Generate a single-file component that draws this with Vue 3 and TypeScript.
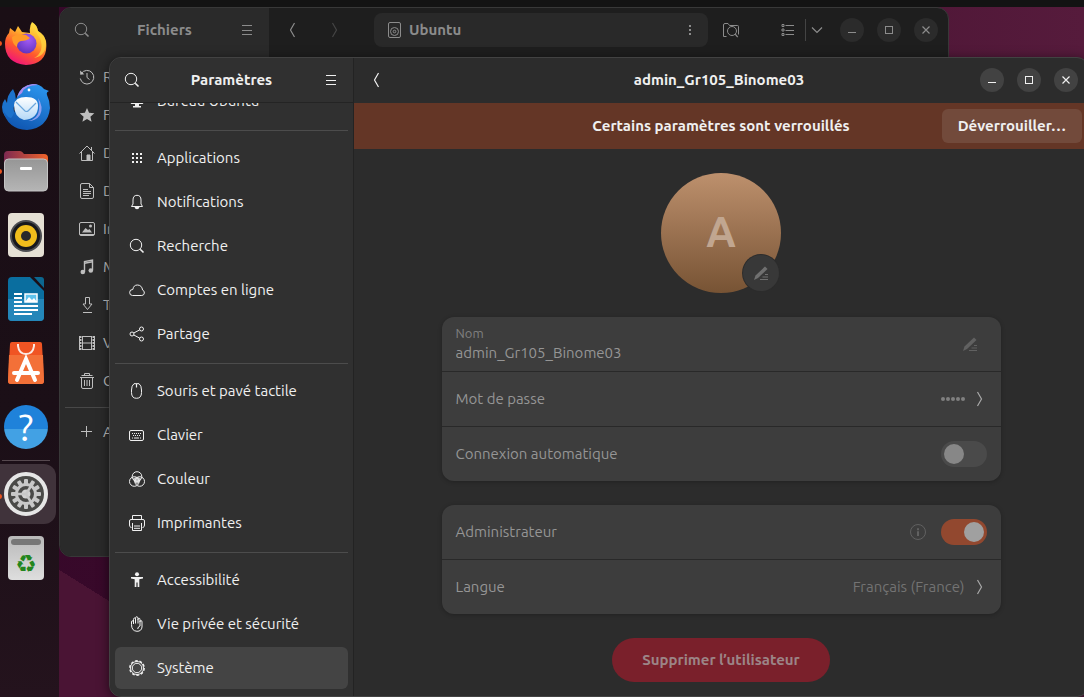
<script setup lang="ts">
import { ref } from 'vue'

interface Entry {
  icon: string
  label: string
}

const glyphs: Record<string, string> = {
  search: '<circle cx="7" cy="7" r="5.7"/><path d="M11.2 11.2l3.3 3.3" stroke-width="1.6"/>',
  menu: '<path d="M3 3.5h10M3 8.5h10M3 12.5h10"/>',
  back: '<path d="M9.500 1 5.500 8l4 7" stroke-width="1.200"/>',
  forward: '<path d="M6.500 1l4 7-4 7" stroke-width="1.200"/>',
  down: '<path d="M3 5.500l5 5 5-5" stroke-width="1.200"/>',
  minimize: '<path d="M4 10.500h8"/>',
  maximize: '<rect x="4.500" y="4.500" width="7" height="7"/>',
  close: '<path d="M4.500 4.500l7 7M11.500 4.500l-7 7" stroke-width="1.200"/>',
  drive: '<rect x="2.500" y=".5" width="12" height="15" rx="1.500"/><circle cx="8.500" cy="9.500" r="4"/><circle cx="8.500" cy="9.500" r="1.300"/>',
  dots: '<path d="M7 3h2v2H7zM7 7h2v2H7zM7 11h2v2H7z" fill="currentColor" stroke="none"/>',
  folderSearch: '<path d="M3.500 14.500H.5V3q0-1.500 1.500-1.500h3l1.500 2h8q1 0 1 1v8"/><circle cx="9" cy="9" r="4.500"/><path d="M12.200 12.200l2.500 3" stroke-width="1.300"/>',
  list: '<path d="M5.500 3.500H14M5.500 8.500H14M5.500 12.500H14"/><path d="M2 2.500h2v2H2zM2 7h2v2H2zM2 11.500h2v2H2z"/>',
  recent: '<path d="M2.300 4.500A6.800 6.800 0 1 1 1.300 9.500"/><path d="M1 1.500l.3 4.200 4-.4z" fill="currentColor" stroke="none"/><path d="M8 4v4.500l2.500 2"/>',
  star: '<path d="M8 1l2.100 4.800 5.200.5-3.900 3.400 1.200 5.100L8 12.100l-4.600 2.700 1.200-5.100L.7 6.300l5.200-.5z" fill="currentColor" stroke="none"/>',
  home: '<path d="M.5 8.500L8 1l7.500 7.500"/><path d="M2.500 7v8.500h11V7M12.500 5V2"/><path d="M8 15.500V10h3v5.500z" fill="currentColor"/>',
  document: '<path d="M10.500.5H3Q1.500.5 1.500 2v12q0 1.500 1.500 1.500h10q1.500 0 1.500-1.500V4.500z"/><path d="M10.500.5v4h4M4 6.500h5M4 8.500h8M4 10.500h8M4 12.500h6"/>',
  image: '<rect x=".5" y="1.500" width="15" height="13" rx="1.500"/><path d="M3 11.500l3.500-4.500 2.500 2 1.500-1L13 11.500z" fill="currentColor" stroke="none"/><circle cx="11.500" cy="5" r="1.500" fill="currentColor" stroke="none"/><path d="M1 13.500h14"/>',
  music: '<path d="M5.500 13V2.500l8-1.500v10" stroke-width="1.400"/><path d="M5.500 4.200l8-1.500" stroke-width="1.500"/><circle cx="3.800" cy="13" r="2.300" fill="currentColor" stroke="none"/><circle cx="11.800" cy="11.500" r="2.300" fill="currentColor" stroke="none"/>',
  download: '<path d="M6.500.5h4V7h2.500l-4.500 5.500L4 7h2.500zM4 15.500h9"/>',
  video: '<rect x="3.500" y="1.500" width="9" height="13"/><path d="M3 8h10"/><path d="M1.500 1v14M14.500 1v14" stroke-width="2" stroke-dasharray="2 1"/><path d="M.5 1v14M15.500 1v14"/>',
  trash: '<path d="M1 4.500h14M5.500 2.500v-2h5v2M2.500 2.500h11M2.500 5v9q0 1.500 1.500 1.500h8q1.500 0 1.500-1.500V5M5.500 7v6M8 7v6M10.500 7v6"/>',
  plus: '<path d="M7.500 2v11M2 7.500h11"/>',
  desktop: '<rect x="1.500" y="1.500" width="13" height="9" rx="1.500"/><path d="M2 9h3v1.500H2zM11 9h3v1.500h-3zM6 11h4v2h2v1.500H4V13h2z" fill="currentColor" stroke="none"/>',
  apps: '<path d="M3 3h2v2H3zM7 3h2v2H7zM11 3h2v2h-2zM3 7h2v2H3zM7 7h2v2H7zM11 7h2v2h-2zM3 11h2v2H3zM7 11h2v2H7zM11 11h2v2h-2z" fill="currentColor" stroke="none"/>',
  bell: '<path d="M2.500 12.500h11L12 10V6Q12 1.300 8 1.300T4 6v4z"/><path d="M5.500 13h5Q10 15.300 8 15.300T5.500 13z" fill="currentColor" stroke="none"/>',
  cloud: '<path d="M3.500 13.500h9.300a2.800 2.800 0 0 0 .8-5.400Q12.800 3 8.300 3 4.600 3 3.800 7.500A3 3 0 0 0 3.500 13.500z"/>',
  share: '<circle cx="3" cy="8" r="2"/><circle cx="12.500" cy="3" r="2"/><circle cx="12.500" cy="13" r="2"/><path d="M4.800 7l6-3.200M4.800 9l6 3.200"/>',
  mouse: '<path d="M5 .7h5Q12.500 2.500 12.500 7v2.500Q12.500 15.300 7.500 15.300T2.500 9.500V7Q2.500 2.500 5 .7z"/><path d="M7.500 1v3.500" stroke-width="1.200"/>',
  keyboard: '<rect x=".5" y="3.500" width="14" height="10" rx="1.500"/><path d="M3 6.500h10M4 8.500h8" stroke-dasharray="1 1"/><path d="M3 11h1M5 11h5M11 11h1"/>',
  color: '<circle cx="8" cy="5.500" r="4.800"/><circle cx="5.300" cy="10.500" r="4.800"/><circle cx="10.700" cy="10.500" r="4.800"/><path d="M4 7.500q4-3 8 0-.5 4-4 5.500-3.500-1.500-4-5.500z" fill="currentColor" fill-opacity=".75" stroke="none"/>',
  printer: '<path d="M3.500 4V.5h9V4"/><path d="M2.500 12.500H2Q.5 12 .5 10V6Q.5 4.500 2 4.500h12q1.500 0 1.500 1.500v4q0 2-1.500 2.500h-.5"/><path d="M3.500 8v7.500h9V8M5 11h6M5 13.300h6"/>',
  person: '<circle cx="8" cy="2.300" r="2" fill="currentColor" stroke="none"/><path d="M2 5h12v1.500l-3.700.8V15H8.600v-4.500H7.400V15H5.700V7.300L2 6.500z" fill="currentColor" stroke="none"/>',
  hand: '<path d="M4.500 8V3.500q0-1.500 1-1.500t1 1.500v-1Q6.500.7 7.700.7T9 2.500v1q0-1.300 1-1.300T11 3.700v2q0-1.200 1-1.200t1 1.500v5Q12.500 15.300 8 15.300 2.500 15 2.500 8.500V6q0-1.200 1-1.200T4.500 6z"/><path d="M6.500 3v4.500M9 3v4.500M11 5v5Q9 10.500 8.700 13"/>',
  gear: '<circle cx="8" cy="8" r="4.700"/><circle cx="8" cy="8" r="6.500"/><circle cx="8" cy="8" r="7.200" stroke-width="1.400" stroke-dasharray="2.800 1.724"/>',
  pencil: '<path d="M1 15l1.500-4.500L12 1.500l2.500 2.500L5 13z" fill="currentColor" stroke="none"/><path d="M12 9.500h3M9.500 12H15M7 14.500h8" stroke-width="1.200"/>',
  info: '<circle cx="8" cy="8" r="7.500"/><path d="M7 4.200h2v2H7zM7 7.200h2V12H7z" fill="currentColor" stroke="none"/>',
}

const places: Entry[] = [
  { icon: 'recent', label: 'Récents' },
  { icon: 'star', label: 'Favoris' },
  { icon: 'home', label: 'Dossier' },
  { icon: 'document', label: 'Docs' },
  { icon: 'image', label: 'Images' },
  { icon: 'music', label: 'Musique' },
  { icon: 'download', label: 'Télécharg.' },
  { icon: 'video', label: 'Vidéos' },
  { icon: 'trash', label: 'Corbeille' },
]

const panels: Entry[][] = [
  [{ icon: 'desktop', label: 'Bureau Ubuntu' }],
  [
    { icon: 'apps', label: 'Applications' },
    { icon: 'bell', label: 'Notifications' },
    { icon: 'search', label: 'Recherche' },
    { icon: 'cloud', label: 'Comptes en ligne' },
    { icon: 'share', label: 'Partage' },
  ],
  [
    { icon: 'mouse', label: 'Souris et pavé tactile' },
    { icon: 'keyboard', label: 'Clavier' },
    { icon: 'color', label: 'Couleur' },
    { icon: 'printer', label: 'Imprimantes' },
  ],
  [
    { icon: 'person', label: 'Accessibilité' },
    { icon: 'hand', label: 'Vie privée et sécurité' },
    { icon: 'gear', label: 'Système' },
  ],
]

const windowButtons: Entry[] = [
  { icon: 'minimize', label: 'Réduire' },
  { icon: 'maximize', label: 'Agrandir' },
  { icon: 'close', label: 'Fermer' },
]

const current = ref('Système')
const userName = ref('admin_Gr105_Binome03')
const autoLogin = ref(false)
const administrator = ref(true)
const teeth = Array.from({ length: 12 }, (_, i) => i * 30)
</script>

<template>
  <div class="desktop">
    <div class="topbar"></div>
    <div class="screen">
      <nav class="dock" aria-label="Dock">
        <button class="launcher running" aria-label="Firefox">
          <svg viewBox="0 0 44 44">
            <defs>
              <linearGradient id="fx" x1=".8" y1="0" x2=".3" y2="1">
                <stop offset="0" stop-color="#fff04a" /><stop offset=".35" stop-color="#ffb02e" />
                <stop offset=".65" stop-color="#ff5a2c" /><stop offset="1" stop-color="#f0127c" />
              </linearGradient>
              <radialGradient id="fxg" cx=".6" cy=".3" r=".8">
                <stop offset="0" stop-color="#a35bf5" /><stop offset="1" stop-color="#5a2fb8" />
              </radialGradient>
            </defs>
            <path d="M28 1q5 3 6 9 6 4 8 10Q45 43 22 44 1 42 1 23q0-7 4-11l1-5 5 4 3-6 4 6 8 1q-1-7 2-11z" fill="url(#fx)" />
            <circle cx="22.500" cy="22.500" r="10" fill="url(#fxg)" />
            <path d="M8 16q6-4 14-2l4 3q-3 3-9 3-4 1-4 6-5-3-5-10z" fill="#ff9a28" />
            <path d="M29 2q2 9 7 15 5 14-6 20 12-2 12-15-1-9-8-12-1-6-5-8z" fill="#ffd53f" opacity=".75" />
          </svg>
        </button>
        <button class="launcher" aria-label="Thunderbird">
          <svg class="wide" viewBox="0 0 48 48">
            <defs>
              <linearGradient id="tb" x1=".7" y1="0" x2=".3" y2="1">
                <stop offset="0" stop-color="#2a94ec" /><stop offset="1" stop-color="#0f55b0" />
              </linearGradient>
              <linearGradient id="tbm" x2="0" y2="1">
                <stop offset="0" stop-color="#ffffff" /><stop offset="1" stop-color="#b4d8f7" />
              </linearGradient>
            </defs>
            <path d="M11 6q3 5 3 11-4 8-1 15l-2 8Q0 34 0 24q0-4 3-8l2 4q0-8 6-14z" fill="#1c72cc" />
            <path d="M15 14Q19 2 31 1q7 0 11 5l5 2q-3 1-2 4 3 6 3 13-2 20-23 22Q5 46 1 27q4 7 8 8 3-3 4-9-1-7 2-12z" fill="url(#tb)" />
            <path d="M15 14Q19 2 31 1q3 0 5 1-13 0-16 8z" fill="#a98aec" />
            <path d="M36 15q6 9 2 17-4 6-12 6 10-2 11-11 1-6-1-12z" fill="#8fa0f0" />
            <path d="M12 22q1-8 12-8 12 0 12 9 0 13-14 14-10-3-10-15z" fill="url(#tbm)" />
            <path d="M14 19l9 9q2 1 3 0l8-8" fill="none" stroke="#6aa6dc" stroke-width="1.200" />
            <circle cx="27" cy="7" r="1.400" fill="#fff" />
          </svg>
        </button>
        <button class="launcher running" aria-label="Fichiers">
          <svg viewBox="0 0 44 44">
            <defs>
              <linearGradient id="fo"><stop offset="0" stop-color="#7d2951" /><stop offset="1" stop-color="#f0642b" /></linearGradient>
              <linearGradient id="ff" x2="0" y2="1"><stop offset="0" stop-color="#969696" /><stop offset="1" stop-color="#b5b5b5" /></linearGradient>
            </defs>
            <path d="M0 6q0-4 4-4h12q2 0 4 3h20q4 0 4 4v15H0z" fill="url(#fo)" />
            <rect x=".5" y="10" width="43" height="32" rx="4" fill="url(#ff)" stroke="#c4c4c4" />
            <rect x="16" y="18" width="12" height="3" rx="1" fill="#fff" />
          </svg>
        </button>
        <button class="launcher" aria-label="Rhythmbox">
          <svg viewBox="0 0 44 44">
            <rect x="4" width="36" height="44" rx="4" fill="#e5e0d4" />
            <circle cx="22" cy="23" r="16" fill="#4b4c50" />
            <circle cx="22" cy="23" r="14" fill="#17181c" />
            <circle cx="22" cy="23" r="11" fill="#f0bd1c" />
            <circle cx="22" cy="23" r="5" fill="#29292b" />
          </svg>
        </button>
        <button class="launcher" aria-label="LibreOffice Writer">
          <svg viewBox="0 0 44 44">
            <path d="M8 0h18l14 14v26q0 4-4 4H8q-4 0-4-4V4q0-4 4-4z" fill="#0a6e9f" />
            <path d="M4 22h36v18q0 4-4 4H8q-4 0-4-4z" fill="#2486b9" />
            <path d="M30 0h7q3 0 3 3v8z" fill="#0c668f" />
            <path d="M10 17h8M10 21h8M10 25h8M10 29h24M10 33h24M10 37h18" stroke="#fff" stroke-width="2" />
            <rect x="21" y="17" width="12" height="8" fill="#5ec3ec" stroke="#fff" stroke-width="1.500" />
            <path d="M21 25l4-5 3 3 2-2 3 4z" fill="#fff" />
          </svg>
        </button>
        <button class="launcher" aria-label="Logithèque">
          <svg viewBox="0 0 44 44">
            <path d="M6 3q0-2 2-2h28q2 0 2 2l2 37q0 3-3 3H7q-3 0-3-3z" fill="#f05423" />
            <path d="M5 14h34l1 26q0 3-3 3H7q-3 0-3-3z" fill="#f37038" />
            <path d="M14 3v2q1 8 8 8t8-8V3" fill="none" stroke="#fbe9e2" stroke-width="2" />
            <path d="M13 39l9-21 9 21M10 32h24" fill="none" stroke="#fff" stroke-width="4" stroke-linecap="round" />
          </svg>
        </button>
        <button class="launcher help" aria-label="Aide"><span>?</span></button>
        <hr class="dock-line" />
        <button class="launcher running active" aria-label="Paramètres">
          <svg viewBox="0 0 44 44">
            <circle cx="22" cy="22" r="20" fill="#4a4a48" stroke="#e6e6e6" stroke-width="4" />
            <rect v-for="t in teeth" :key="t" x="20" y="7" width="4" height="6" rx="1" fill="#c8c8c8" :transform="`rotate(${t} 22 22)`" />
            <circle cx="22" cy="22" r="9.500" fill="none" stroke="#c8c8c8" stroke-width="3" />
            <circle cx="22" cy="22" r="4.500" fill="#d2d2d2" />
            <path d="M22 22h-9M22 22l5-8M22 22l5 8" stroke="#c8c8c8" stroke-width="2.500" />
          </svg>
        </button>
        <button class="launcher" aria-label="Corbeille">
          <svg viewBox="0 0 44 44">
            <defs><linearGradient id="tr" x2="0" y2="1"><stop offset="0" stop-color="#b9b9b9" /><stop offset="1" stop-color="#dedede" /></linearGradient></defs>
            <rect x="4" width="36" height="44" rx="4" fill="url(#tr)" />
            <rect x="7" y="3" width="30" height="6" rx="3" fill="#777" />
            <text class="recycle" x="22" y="36" text-anchor="middle">♻</text>
          </svg>
        </button>
      </nav>

      <main class="workspace">
        <section class="window files" aria-label="Fichiers">
          <aside class="files-side">
            <header class="bar">
              <button class="tool" aria-label="Rechercher"><svg class="icon" viewBox="0 0 16 16" v-html="glyphs.search"></svg></button>
              <h2>Fichiers</h2>
              <button class="tool" aria-label="Menu"><svg class="icon" viewBox="0 0 16 16" v-html="glyphs.menu"></svg></button>
            </header>
            <div class="places">
              <a v-for="p in places" :key="p.label" class="place" href="#">
                <svg class="icon" viewBox="0 0 16 16" v-html="glyphs[p.icon]"></svg><span>{{ p.label }}</span>
              </a>
              <hr />
              <a class="place" href="#">
                <svg class="icon" viewBox="0 0 16 16" v-html="glyphs.plus"></svg><span>Autres</span>
              </a>
            </div>
          </aside>
          <div class="files-main">
            <header class="bar">
              <button class="tool" aria-label="Précédent"><svg class="icon" viewBox="0 0 16 16" v-html="glyphs.back"></svg></button>
              <button class="tool faint" aria-label="Suivant"><svg class="icon" viewBox="0 0 16 16" v-html="glyphs.forward"></svg></button>
              <div class="path">
                <svg class="icon" viewBox="0 0 16 16" v-html="glyphs.drive"></svg>
                <span>Ubuntu</span>
                <button class="path-menu" aria-label="Options"><svg class="icon" viewBox="0 0 16 16" v-html="glyphs.dots"></svg></button>
              </div>
              <button class="tool" aria-label="Rechercher dans le dossier"><svg class="icon" viewBox="0 0 16 16" v-html="glyphs.folderSearch"></svg></button>
              <div class="view">
                <button class="tool" aria-label="Liste"><svg class="icon" viewBox="0 0 16 16" v-html="glyphs.list"></svg></button>
                <button class="view-more" aria-label="Affichage"><svg class="icon" viewBox="0 0 16 16" v-html="glyphs.down"></svg></button>
              </div>
              <div class="controls">
                <button v-for="b in windowButtons" :key="b.label" class="round" :aria-label="b.label">
                  <svg class="icon" viewBox="0 0 16 16" v-html="glyphs[b.icon]"></svg>
                </button>
              </div>
            </header>
          </div>
        </section>

        <section class="window settings" aria-label="Paramètres">
          <aside class="set-side">
            <header class="bar">
              <button class="tool" aria-label="Rechercher"><svg class="icon" viewBox="0 0 16 16" v-html="glyphs.search"></svg></button>
              <h2>Paramètres</h2>
              <button class="tool" aria-label="Menu"><svg class="icon" viewBox="0 0 16 16" v-html="glyphs.menu"></svg></button>
            </header>
            <nav class="panels">
              <div v-for="(group, i) in panels" :key="i" class="group">
                <button
                  v-for="p in group"
                  :key="p.label"
                  class="panel"
                  :class="{ selected: p.label === current }"
                  @click="current = p.label"
                >
                  <svg class="icon" viewBox="0 0 16 16" v-html="glyphs[p.icon]"></svg>{{ p.label }}
                </button>
              </div>
            </nav>
          </aside>

          <div class="set-main">
            <header class="bar">
              <button class="tool" aria-label="Retour"><svg class="icon" viewBox="0 0 16 16" v-html="glyphs.back"></svg></button>
              <h1>{{ userName }}</h1>
              <div class="controls">
                <button v-for="b in windowButtons" :key="b.label" class="round" :aria-label="b.label">
                  <svg class="icon" viewBox="0 0 16 16" v-html="glyphs[b.icon]"></svg>
                </button>
              </div>
            </header>
            <div class="banner">
              <p>Certains paramètres sont verrouillés</p>
              <button class="unlock">Déverrouiller…</button>
            </div>
            <div class="content">
              <div class="avatar">
                A
                <button class="avatar-edit" aria-label="Modifier l’image"><svg class="icon" viewBox="0 0 16 16" v-html="glyphs.pencil"></svg></button>
              </div>
              <div class="card">
                <div class="row">
                  <div class="field">
                    <label for="name">Nom</label>
                    <input id="name" v-model="userName" type="text" />
                  </div>
                  <svg class="icon pencil" viewBox="0 0 16 16" v-html="glyphs.pencil"></svg>
                </div>
                <button class="row">
                  <span class="name">Mot de passe</span>
                  <span class="bullets"><i v-for="n in 5" :key="n"></i></span>
                  <svg class="icon go" viewBox="0 0 16 16" v-html="glyphs.forward"></svg>
                </button>
                <div class="row">
                  <label class="name" for="auto">Connexion automatique</label>
                  <input id="auto" v-model="autoLogin" class="switch" type="checkbox" />
                </div>
              </div>
              <div class="card">
                <div class="row">
                  <label class="name" for="admin">Administrateur</label>
                  <svg class="icon info" viewBox="0 0 16 16" v-html="glyphs.info"></svg>
                  <input id="admin" v-model="administrator" class="switch" type="checkbox" />
                </div>
                <button class="row">
                  <span class="name">Langue</span>
                  <span class="value">Français (France)</span>
                  <svg class="icon go" viewBox="0 0 16 16" v-html="glyphs.forward"></svg>
                </button>
              </div>
              <button class="delete">Supprimer l’utilisateur</button>
            </div>
          </div>
        </section>
      </main>
    </div>
  </div>
</template>

<style>
html,
body {
  background: #131313;
}
</style>

<style scoped>
* {
  box-sizing: border-box;
}
.desktop {
  display: flex;
  flex-direction: column;
  height: 100vh;
  overflow: hidden;
  font-family: Ubuntu, "Open Sans", "Noto Sans", sans-serif;
  font-size: 15px;
  line-height: 20px;
  color: #f0f0f0;
}
button {
  padding: 0;
  border: 0;
  background: none;
  color: inherit;
  font: inherit;
}
h1,
h2,
p,
hr {
  margin: 0;
  border: 0;
}
h1,
h2 {
  flex: 1;
  font-size: 15px;
  font-weight: 600;
  line-height: 20px;
  text-align: center;
}
a {
  color: inherit;
  text-decoration: none;
}
.icon {
  display: block;
  flex: none;
  width: 16px;
  height: 16px;
  fill: none;
  stroke: currentColor;
}
.topbar {
  flex: none;
  height: 7px;
  background: #131313;
}
.screen {
  display: flex;
  flex: 1;
  min-height: 0;
  background: linear-gradient(212deg, transparent 88%, #4a1434 88%), linear-gradient(90deg, #36082a, #3c0b29 30%, #561b3c);
}
.dock {
  display: flex;
  flex: none;
  flex-direction: column;
  width: 59px;
  padding: 4px 3px 0 0;
  background: linear-gradient(#1a0e15, #1b0f17 60%, #24131d);
}
.launcher {
  position: relative;
  display: flex;
  flex: none;
  align-items: center;
  justify-content: center;
  height: 64px;
  padding-right: 4px;
}
.launcher svg {
  width: 44px;
  height: 44px;
}
.launcher svg.wide {
  width: 48px;
  height: 48px;
}
.recycle {
  fill: #23861d;
  font-family: "DejaVu Sans", sans-serif;
  font-size: 24px;
}
.running::before {
  content: "";
  position: absolute;
  left: -3px;
  top: 30px;
  width: 5px;
  height: 5px;
  border-radius: 3px;
  background: #e95420;
}
.active {
  height: 60px;
  margin: 2px 0;
  border-radius: 0 12px 12px 0;
  background: #40333b;
}
.help span {
  width: 44px;
  height: 44px;
  border-radius: 50%;
  background: linear-gradient(#1f82da 0 54%, #42a1e4 54%);
  color: #fff;
  font-size: 38px;
  line-height: 44px;
}
.dock-line {
  flex: none;
  height: 1px;
  margin: 1px 6px 1px 2px;
  background: #56494f;
}
.workspace {
  position: relative;
  flex: 1;
}
.window {
  position: absolute;
  display: flex;
  overflow: hidden;
  border: 1px solid #424242;
  border-radius: 12px;
}
.files {
  inset: 0 135px 140px 0;
  border-color: #383838;
  color: #8c8c8c;
  background: #1e1e1e;
}
.settings {
  inset: 50px -5px 0 50px;
  background: #2c2c2c;
  box-shadow: 0 2px 12px rgb(0 0 0 / 55%);
}
.bar {
  display: flex;
  flex: none;
  align-items: center;
  height: 45px;
  padding: 0 5px 1px;
}
.tool {
  display: flex;
  flex: none;
  align-items: center;
  justify-content: center;
  width: 34px;
  height: 34px;
}
.faint {
  margin-left: 7px;
  opacity: 0.35;
}
.files-side {
  width: 209px;
  background: #2a2a2a;
}
.places {
  padding: 5px;
  color: #bebebe;
}
.place {
  display: flex;
  align-items: center;
  gap: 8px;
  height: 38px;
  padding-left: 14px;
}
.places hr {
  height: 1px;
  margin: 7px 0 5px;
  background: #484848;
}
.files-main {
  flex: 1;
}
.files-main .bar {
  padding: 0 10px 1px 7px;
}
.path {
  display: flex;
  flex: 1;
  align-items: center;
  gap: 7px;
  height: 34px;
  margin: 0 6px 0 23px;
  padding: 0 10px 0 12px;
  border-radius: 8px;
  background: #292929;
  font-weight: 600;
}
.path span {
  flex: 1;
}
.view {
  display: flex;
  align-items: center;
  margin: 0 13px 0 23px;
}
.view-more {
  height: 22px;
  padding: 3px 2px 3px 3px;
  border-left: 1px solid #444;
}
.controls {
  display: flex;
  gap: 13px;
}
.round {
  display: flex;
  align-items: center;
  justify-content: center;
  width: 24px;
  height: 24px;
  border-radius: 50%;
  background: #2b2b2b;
}
.settings .round {
  background: #424242;
}
.set-side {
  display: flex;
  flex: none;
  flex-direction: column;
  width: 244px;
  border-right: 1px solid #232323;
  background: #303030;
}
.set-side .bar {
  padding-bottom: 0;
  border-bottom: 1px solid #242424;
}
.panels {
  display: flex;
  flex: 1;
  flex-direction: column;
  justify-content: flex-end;
  min-height: 0;
  padding: 0 5px 5px;
  overflow: hidden;
}
.group {
  flex: none;
}
.group + .group {
  margin-top: 6px;
  padding-top: 6px;
  border-top: 1px solid #4c4c4c;
}
.panel {
  display: flex;
  align-items: center;
  gap: 12px;
  width: 100%;
  height: 42px;
  margin-bottom: 2px;
  padding-left: 14px;
  border-radius: 6px;
}
.selected {
  background: #444;
}
.set-main {
  display: flex;
  flex: 1;
  flex-direction: column;
  min-width: 0;
}
.set-main .bar {
  display: grid;
  grid-template-columns: 1fr auto 1fr;
  padding: 0 10px 1px 6px;
}
.set-main .controls {
  justify-self: end;
}
.banner {
  display: grid;
  flex: none;
  grid-template-columns: 1fr auto 1fr;
  align-items: center;
  height: 46px;
  padding: 0 6px;
  background: #643626;
  font-weight: 600;
}
.banner p {
  grid-column: 2;
}
.unlock {
  justify-self: end;
  height: 34px;
  padding: 0 16px;
  border-radius: 6px;
  background: #724a3b;
}
.content {
  display: flex;
  flex: 1;
  flex-direction: column;
  align-items: center;
  gap: 24px;
  min-height: 0;
  padding: 24px 24px 0;
  color: #959595;
}
.avatar {
  position: relative;
  flex: none;
  width: 120px;
  height: 120px;
  border-radius: 50%;
  background: linear-gradient(#bd906d, #775334);
  color: #c1a690;
  font-size: 42px;
  font-weight: 700;
  line-height: 118px;
  text-align: center;
}
.avatar-edit {
  position: absolute;
  right: 2px;
  bottom: 2px;
  display: flex;
  align-items: center;
  justify-content: center;
  width: 36px;
  height: 36px;
  border-radius: 50%;
  background: #383838;
  box-shadow: 0 0 0 1px #2c2c2c;
  color: #707070;
}
.card {
  flex: none;
  width: 100%;
  max-width: 559px;
  border-radius: 12px;
  background: #3d3d3d;
  box-shadow: 0 1px 4px rgb(0 0 0 / 25%);
}
.row {
  display: flex;
  align-items: center;
  width: 100%;
  height: 54px;
  padding: 0 14px;
  text-align: left;
}
.row + .row {
  height: 55px;
  border-top: 1px solid #292929;
}
.name {
  flex: 1;
}
.field {
  display: flex;
  flex: 1;
  flex-direction: column;
  padding-bottom: 2px;
}
.field label {
  font-size: 13px;
  color: #808080;
}
.field input {
  height: 20px;
  padding: 0;
  border: 0;
  outline: 0;
  background: none;
  color: inherit;
  font: inherit;
}
.pencil {
  margin-right: 9px;
  color: #616161;
}
.bullets {
  display: flex;
  gap: 1px;
  margin-right: 6px;
}
.bullets i {
  width: 4px;
  height: 4px;
  border-radius: 2px;
  background: #808080;
}
.go {
  color: #a8a8a8;
}
.info {
  margin-right: 15px;
  color: #616161;
}
.value {
  margin-right: 6px;
  color: #737373;
}
.switch {
  appearance: none;
  display: flex;
  width: 46px;
  height: 26px;
  margin: 0;
  padding: 3px;
  border-radius: 13px;
  background: #4a4a4a;
}
.switch::before {
  content: "";
  width: 20px;
  height: 20px;
  border-radius: 50%;
  background: #878787;
}
.switch:checked {
  justify-content: flex-end;
  background: #92482f;
}
.switch:checked::before {
  background: #a0a0a0;
}
.delete {
  flex: none;
  height: 44px;
  padding: 0 30px;
  border-radius: 22px;
  background: #7a202b;
  color: #9c8587;
  font-weight: 600;
}
</style>
